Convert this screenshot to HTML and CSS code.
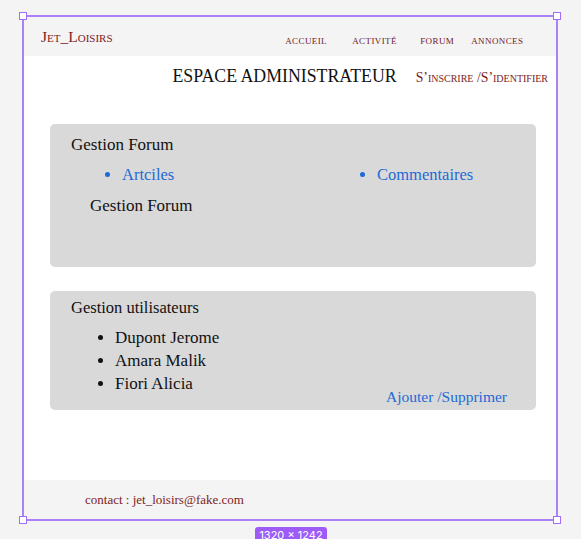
FILE: index.html
```html
<!DOCTYPE html>
<html lang="fr">
<head>
<meta charset="utf-8">
<title>Jet_Loisirs - Espace administrateur</title>
<link rel="stylesheet" href="styles.css">
</head>
<body>
<div class="canvas">
  <div class="frame">
    <span class="handle handle-tl"></span>
    <span class="handle handle-tr"></span>
    <span class="handle handle-bl"></span>
    <span class="handle handle-br"></span>
    <span class="size-label">1320 × 1242</span>

    <header class="topbar">
      <div class="logo">Jet_Loisirs</div>
      <nav class="nav">
        <a class="nav-item nav-accueil">accueil</a>
        <a class="nav-item nav-activite">activité</a>
        <a class="nav-item nav-forum">forum</a>
        <a class="nav-item nav-annonces">annonces</a>
      </nav>
    </header>

    <main class="main">
      <div class="title-row">
        <h1 class="page-title">ESPACE ADMINISTRATEUR</h1>
        <a class="auth">S’inscrire /S’identifier</a>
      </div>

      <section class="card card-forum">
        <h2 class="card-title">Gestion Forum</h2>
        <ul class="forum-links">
          <li>Artciles</li>
          <li>Commentaires</li>
        </ul>
        <p class="sub-title">Gestion Forum</p>
      </section>

      <section class="card card-users">
        <h2 class="card-title">Gestion utilisateurs</h2>
        <div class="users-body">
          <ul class="users">
            <li>Dupont Jerome</li>
            <li>Amara Malik</li>
            <li>Fiori Alicia</li>
          </ul>
          <a class="users-action">Ajouter /Supprimer</a>
        </div>
      </section>
    </main>

    <footer class="footer">
      <span class="contact">contact : jet_loisirs@fake.com</span>
    </footer>
  </div>
</div>
</body>
</html>
```

FILE: styles.css
```css
* { box-sizing: border-box; }

html, body {
  margin: 0;
  padding: 0;
  background: #f4f4f4;
  font-family: "Liberation Serif", "Times New Roman", serif;
}

.canvas {
  padding: 15px 0 0 22px;
  height: 539px;
  overflow: hidden;
}

.frame {
  position: relative;
  width: 536px;
  height: 506px;
  border: 2px solid #ab82f5;
  background: #ffffff;
  display: flex;
  flex-direction: column;
}

.handle {
  position: absolute;
  width: 8px;
  height: 8px;
  background: #ffffff;
  border: 1.5px solid #a36ef5;
}
.handle-tl { left: -5px; top: -5px; }
.handle-tr { right: -5px; top: -5px; }
.handle-bl { left: -5px; bottom: -5px; }
.handle-br { right: -5px; bottom: -5px; }

.size-label {
  position: absolute;
  left: 231px;
  top: 510px;
  width: 72px;
  height: 16px;
  border-radius: 3px;
  background: #9d5cf7;
  color: #ffffff;
  font-family: Inter, "Liberation Sans", sans-serif;
  font-size: 11px;
  line-height: 16px;
  text-align: center;
}

/* Header */
.topbar {
  height: 39px;
  flex: none;
  background: #f4f4f4;
  display: flex;
  align-items: flex-end;
  padding: 0 32.6px 9px 17px;
  color: #7b1d22;
}

.logo {
  font-size: 15.5px;
  font-variant: small-caps;
  line-height: 18px;
  margin-bottom: 1px;
  white-space: nowrap;
}

.nav {
  margin-left: auto;
  display: flex;
  align-items: baseline;
  font-size: 13.5px;
  font-variant: small-caps;
  line-height: 14px;
  letter-spacing: 0.4px;
  white-space: nowrap;
}
.nav-item { color: #6f1a1f; text-decoration: none; }
.nav-accueil { width: 67px; }
.nav-activite { width: 68px; }
.nav-forum { width: 51px; }

/* Main */
.main {
  flex: 1;
  padding: 10px 0 0 26px;
}

.title-row {
  height: 20px;
  display: flex;
  align-items: baseline;
  justify-content: flex-end;
  gap: 19px;
  padding-right: 8px;
  white-space: nowrap;
}

.page-title {
  margin: 0;
  font-size: 17.8px;
  font-weight: normal;
  line-height: 20px;
  color: #111111;
  flex: none;
}

.auth {
  flex: none;
  font-size: 13.8px;
  font-variant: small-caps;
  color: #7b1d22;
  line-height: 20px;
}

.card {
  width: 486px;
  background: #d9d9d9;
  border-radius: 5px;
  padding-left: 21px;
  color: #111111;
}

.card-title {
  margin: 0;
  font-size: 17px;
  font-weight: normal;
  line-height: 20px;
}

.card-forum {
  margin-top: 38px;
  height: 143px;
  padding-top: 11px;
}

.forum-links {
  margin: 10px 0 0;
  padding-left: 51px;
  display: grid;
  grid-template-columns: 255px 1fr;
  font-size: 16.5px;
  line-height: 20px;
  color: #1d6ad6;
}

.sub-title {
  margin: 11px 0 0 19px;
  font-size: 17px;
  line-height: 20px;
}

.card-users {
  margin-top: 24px;
  height: 119px;
  padding: 7px 29px 4px 21px;
}

.card-users .card-title { font-size: 16.5px; }

.users-body {
  margin-top: 8px;
  display: flex;
  align-items: flex-end;
  justify-content: space-between;
}

.users {
  margin: 0 0 11px;
  padding-left: 44px;
  font-size: 17px;
  line-height: 23px;
}

.users-action {
  font-size: 15.5px;
  line-height: 18px;
  color: #1d6ad6;
  white-space: nowrap;
}

/* Footer */
.footer {
  height: 39px;
  flex: none;
  background: #f4f4f4;
  display: flex;
  align-items: center;
  padding-left: 61px;
}

.contact {
  font-size: 13px;
  color: #7b1d22;
}
```
